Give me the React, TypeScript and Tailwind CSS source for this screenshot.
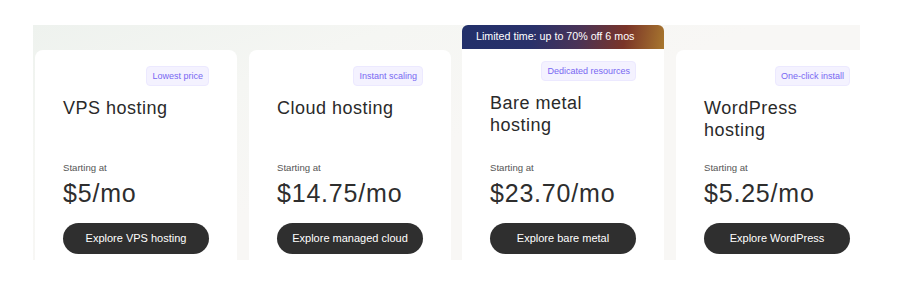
import React from "react";

type Card = {
  badge: string;
  title: string;
  price: string;
  cta: string;
  promo?: string;
};

const cards: Card[] = [
  { badge: "Lowest price", title: "VPS hosting", price: "$5/mo", cta: "Explore VPS hosting" },
  { badge: "Instant scaling", title: "Cloud hosting", price: "$14.75/mo", cta: "Explore managed cloud" },
  {
    badge: "Dedicated resources",
    title: "Bare metal hosting",
    price: "$23.70/mo",
    cta: "Explore bare metal",
    promo: "Limited time: up to 70% off 6 mos",
  },
  { badge: "One-click install", title: "WordPress hosting", price: "$5.25/mo", cta: "Explore WordPress" },
];

function PlanCard({ card }: { card: Card }) {
  const promo = !!card.promo;
  return (
    <div className={`flex w-[202px] shrink-0 flex-col ${promo ? "-ml-[1px]" : "pt-[25px]"}`}>
      {promo && (
        <div className="flex h-[24px] items-center rounded-t-[6px] bg-[linear-gradient(100deg,#22306a_0%,#29316a_35%,#4a3356_58%,#7a3428_80%,#a8772e_100%)] pb-[3px] pl-[14px] text-[10.7px] leading-[12px] text-white">
          {card.promo}
        </div>
      )}
      <div
        className={`flex flex-1 flex-col bg-white px-[28px] pb-[16px] ${
          promo ? "rounded-b-[8px] pt-[12px]" : "rounded-[8px] pt-[16px]"
        }`}
      >
        <div className="flex justify-end">
          <span className="flex h-[20px] items-center rounded-[4px] border border-[#ece9ff] bg-[#f4f2ff] px-[5px] text-[9px] leading-[10px] text-[#7868f2]">
            {card.badge}
          </span>
        </div>
        <div className="mt-[11px] text-[18px] leading-[22px] tracking-[0.5px] text-[#2a2a2a]">{card.title}</div>
        <div className="mt-auto">
          <div className="text-[9.6px] leading-[12px] text-[#555555]">Starting at</div>
          <div className="mt-[5px] text-[25px] leading-[28px] tracking-[0.8px] text-[#2e2e2e]">{card.price}</div>
          <button className="mt-[16px] flex h-[31px] w-full items-center justify-center rounded-full bg-[#2f2f2f] text-[11px] text-white">
            {card.cta}
          </button>
        </div>
      </div>
    </div>
  );
}

export default function App() {
  return (
    <div
      className="h-[285px] w-[912px] bg-white pt-[25px] pl-[33px]"
      style={{ fontFamily: "'Liberation Sans', Arial, sans-serif" }}
    >
      <div className="h-[235px] w-[827px] overflow-hidden bg-[linear-gradient(160deg,#eef2ee_0%,#f5f6f3_25%,#f8f7f5_50%)]">
        <div className="flex h-[245px] gap-[12px] pl-[2px]">
          {cards.map((c) => (
            <PlanCard key={c.title} card={c} />
          ))}
        </div>
      </div>
    </div>
  );
}
